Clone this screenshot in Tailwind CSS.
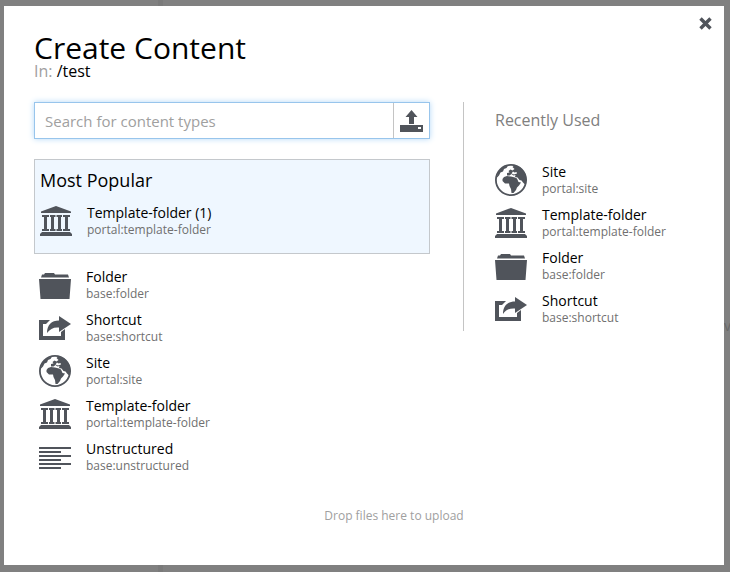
<!DOCTYPE html>
<html lang="en">
<head>
<meta charset="utf-8">
<meta name="viewport" content="width=device-width, initial-scale=1">
<title>Create Content</title>
<script src="https://cdn.jsdelivr.net/npm/@tailwindcss/browser@4"></script>
</head>
<body class="relative min-h-screen bg-[#808080] pt-[6px] pr-[6px] pb-[7px] pl-1 font-['Open_Sans',sans-serif] text-black flex flex-col overflow-hidden">
<div class="absolute inset-y-0 left-[158px] w-[5px] bg-[#7a7a7a]"></div>
<div class="absolute right-0 top-[316px] w-[6px] overflow-hidden text-sm text-[#686868]" aria-hidden="true">va</div>

<svg class="hidden" aria-hidden="true">
  <symbol id="globe" viewBox="0 0 32 32">
    <circle cx="16" cy="16" r="15.100" fill="none" stroke="currentColor" stroke-width="1.800"/>
    <path fill="currentColor" d="M3 8L8 3L13 1.500L11.500 4L9 5L8 7.500L5.500 8.500L4 11.500L1.500 14Z"/>
    <path fill="currentColor" d="M19 1.500L25 3L30 9L31.500 16L30 20.500L28 18.500L26.500 16.500L24.500 16L22.500 13.500L20 13L20.500 11L18.500 11.500L16.500 10L14.500 11.500L12 11.500L12 9L14.500 8.500L13.500 7L15.500 5.500L17.500 6.500L19.500 5L17.500 3Z"/>
    <path fill="currentColor" d="M9 13L12 12L16 12.500L20 13.500L22 14.500L23.500 18L26 18.500L24 21.500L22 23.500L21 26L18.500 29L16.500 29L16 25L14.500 22L14 19.500L10 19.500L7.500 17L7.500 15Z"/>
    <path fill="#fff" d="M16.500 9.500L18 7.500L19.500 8.500L21.500 8L22 9.500L19 10.500Z"/>
  </symbol>
  <symbol id="temple" viewBox="0 0 32 32">
    <path fill="currentColor" d="M16 1L31 6.500V8H1V6.500ZM2 10H9V12H7V24H9V26H2V24H4V12H2ZM10 10H15.500V12H14V24H15.500V26H10V24H11V12H10ZM16.500 10H22V12H21V24H22V26H16.500V24H18V12H16.500ZM23 10H30V12H28V24H30V26H23V24H25V12H23ZM2 27H30L32 29V31H0V29Z"/>
  </symbol>
  <symbol id="folder" viewBox="0 0 32 32">
    <path fill="currentColor" d="M2 8.500L3 5.500H5L6 4H15L16 5.500H29L30 8.500ZM0 10H32L30.500 30H1.500Z"/>
  </symbol>
  <symbol id="shortcut" viewBox="0 0 32 32">
    <path fill="currentColor" d="M0 8H11L7 12H4V24H22V20L26 17V28H0Z"/>
    <path fill="currentColor" d="M20 4L32 12L20 20V15.500C14.500 15 11 17 8 21C8 13 12.500 8.500 20 8.500Z"/>
  </symbol>
  <symbol id="lines" viewBox="0 0 32 32">
    <path fill="currentColor" d="M0 6H32V8H0ZM0 10H22V12H0ZM0 14H32V16H0ZM0 18H22V20H0ZM0 22H32V24H0ZM0 26H22V28H0Z"/>
  </symbol>
</svg>

<main role="dialog" aria-labelledby="title" class="relative grow bg-white px-[30px] pt-6 pb-[39px] flex flex-col">
  <button type="button" aria-label="Close" class="absolute top-[11px] right-3 text-[#50545b]">
    <svg class="size-[13px]" viewBox="0 0 13 13"><path d="M1.500 1.500L11.500 11.500M11.500 1.500L1.500 11.500" stroke="currentColor" stroke-width="3.400"/></svg>
  </button>
  <header>
    <h1 id="title" class="text-[30px] leading-9">Create Content</h1>
    <p class="text-base leading-[11px]"><span class="text-[#a0a0a0]">In:</span> /test</p>
  </header>

  <div class="mt-[25px] flex">
    <div class="grow">
      <div class="flex h-[37px] border border-[#98c5ec] shadow-[0_0_6px_#b4d8f7]">
        <input type="text" aria-label="Search for content types" placeholder="Search for content types" class="min-w-0 grow px-[10px] pt-0.5 text-[15px] outline-none placeholder:text-[#a0a0a0]">
        <button type="button" aria-label="Upload" class="w-9 shrink-0 border-l border-[#c4c4c4] flex items-center justify-center text-[#50545b]">
          <svg class="h-[22px] w-[23px]" viewBox="0 0 23 22"><path fill="currentColor" fill-rule="evenodd" d="M11.500 0L17.500 7H14V14H9V7H5.500ZM0 15H23V22H0ZM18 17H21V19H18Z"/></svg>
        </button>
      </div>

      <section class="mt-5 h-[95px] border border-[#c4c8cc] bg-[#eff7ff] px-[5px] pt-2">
        <h2 class="text-lg leading-6">Most Popular</h2>
        <a href="#" class="mt-[13px] flex h-8 gap-[15px]">
          <svg class="size-8 shrink-0 text-[#50545b]"><use href="#temple"/></svg>
          <span><span class="block text-sm leading-4">Template-folder (1)</span><span class="block text-xs leading-[18px] text-[#707070]">portal:template-folder</span></span>
        </a>
      </section>

      <ul class="mt-[15px] flex flex-col gap-[11px] pl-[5px]">
        <li><a href="#" class="flex h-8 gap-[15px]">
          <svg class="size-8 shrink-0 text-[#50545b]"><use href="#folder"/></svg>
          <span><span class="block text-sm leading-4">Folder</span><span class="block text-xs leading-[18px] text-[#707070]">base:folder</span></span></a></li>
        <li><a href="#" class="flex h-8 gap-[15px]">
          <svg class="size-8 shrink-0 text-[#50545b]"><use href="#shortcut"/></svg>
          <span><span class="block text-sm leading-4">Shortcut</span><span class="block text-xs leading-[18px] text-[#707070]">base:shortcut</span></span></a></li>
        <li><a href="#" class="flex h-8 gap-[15px]">
          <svg class="size-8 shrink-0 text-[#50545b]"><use href="#globe"/></svg>
          <span><span class="block text-sm leading-4">Site</span><span class="block text-xs leading-[18px] text-[#707070]">portal:site</span></span></a></li>
        <li><a href="#" class="flex h-8 gap-[15px]">
          <svg class="size-8 shrink-0 text-[#50545b]"><use href="#temple"/></svg>
          <span><span class="block text-sm leading-4">Template-folder</span><span class="block text-xs leading-[18px] text-[#707070]">portal:template-folder</span></span></a></li>
        <li><a href="#" class="flex h-8 gap-[15px]">
          <svg class="size-8 shrink-0 text-[#50545b]"><use href="#lines"/></svg>
          <span><span class="block text-sm leading-4">Unstructured</span><span class="block text-xs leading-[18px] text-[#707070]">base:unstructured</span></span></a></li>
      </ul>
    </div>

    <aside class="ml-[33px] w-[231px] shrink-0 self-start border-l border-[#c4c4c4] pl-[31px] pb-[6px]">
      <h2 class="text-base leading-9 text-[#808080]">Recently Used</h2>
      <ul class="mt-[26px] flex flex-col gap-[11px]">
        <li><a href="#" class="flex h-8 gap-[15px]">
          <svg class="size-8 shrink-0 text-[#50545b]"><use href="#globe"/></svg>
          <span><span class="block text-sm leading-4">Site</span><span class="block text-xs leading-[18px] text-[#707070]">portal:site</span></span></a></li>
        <li><a href="#" class="flex h-8 gap-[15px]">
          <svg class="size-8 shrink-0 text-[#50545b]"><use href="#temple"/></svg>
          <span><span class="block text-sm leading-4">Template-folder</span><span class="block text-xs leading-[18px] text-[#707070]">portal:template-folder</span></span></a></li>
        <li><a href="#" class="flex h-8 gap-[15px]">
          <svg class="size-8 shrink-0 text-[#50545b]"><use href="#folder"/></svg>
          <span><span class="block text-sm leading-4">Folder</span><span class="block text-xs leading-[18px] text-[#707070]">base:folder</span></span></a></li>
        <li><a href="#" class="flex h-8 gap-[15px]">
          <svg class="size-8 shrink-0 text-[#50545b]"><use href="#shortcut"/></svg>
          <span><span class="block text-sm leading-4">Shortcut</span><span class="block text-xs leading-[18px] text-[#707070]">base:shortcut</span></span></a></li>
      </ul>
    </aside>
  </div>
  <p class="mt-auto pl-[60px] text-center text-xs leading-5 text-[#a0a0a0]">Drop files here to upload</p>
</main>
</body>
</html>
